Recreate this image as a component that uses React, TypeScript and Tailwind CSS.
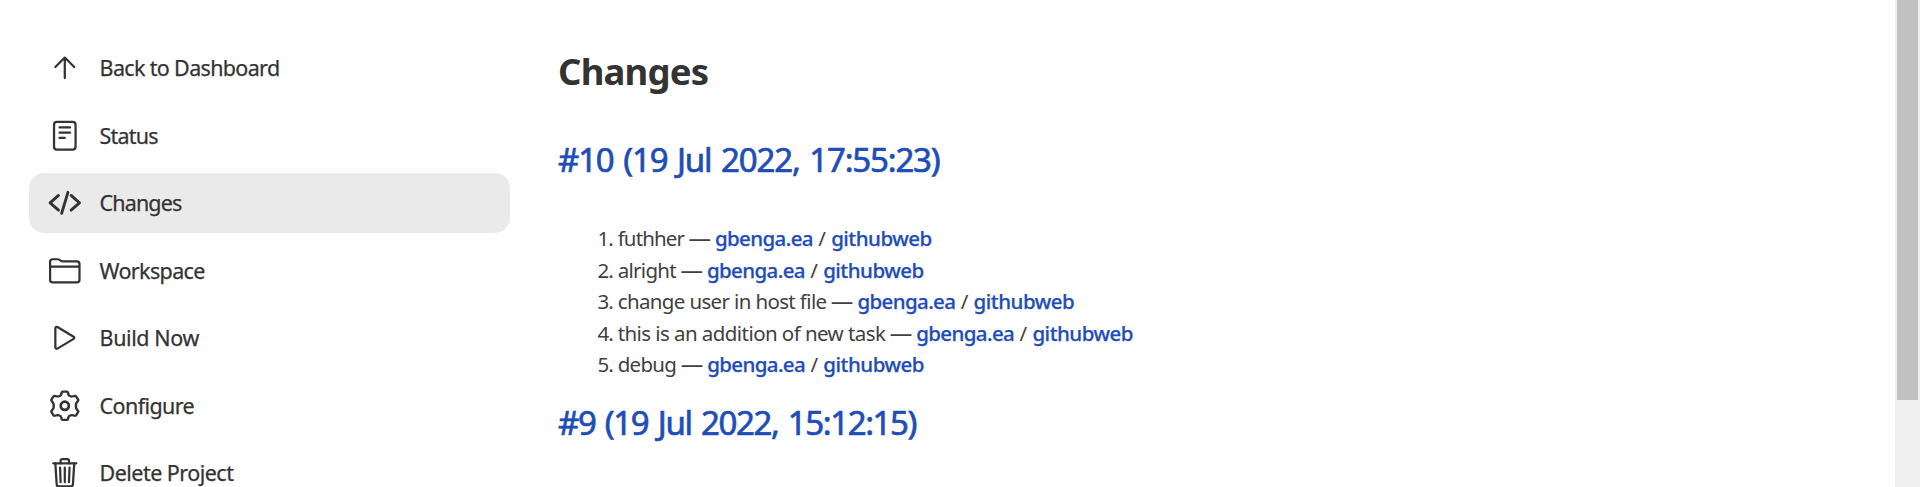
import type { ReactNode } from "react";

type NavItem = { label: string; tracking: string; stroke: number; icon: ReactNode; active?: boolean };

const navItems: NavItem[] = [
  {
    label: "Back to Dashboard",
    tracking: "tracking-[-0.66px]",
    stroke: 34,
    icon: <path d="M112 244l144-144 144 144M256 120v292" />,
  },
  {
    label: "Status",
    tracking: "tracking-[-0.8px]",
    stroke: 34,
    icon: (
      <>
        <rect x="92" y="44" width="328" height="424" rx="44" />
        <path d="M176 128h160M176 208h160M176 288h80" />
      </>
    ),
  },
  {
    label: "Changes",
    tracking: "tracking-[-0.87px]",
    stroke: 44,
    active: true,
    icon: <path d="M160 368L32 256l128-112M352 368l128-112-128-112M304 96l-96 320" />,
  },
  {
    label: "Workspace",
    tracking: "tracking-[-0.65px]",
    stroke: 34,
    icon: (
      <path d="M440 432H72a40 40 0 01-40-40V120a40 40 0 0140-40h75.89a40 40 0 0122.19 6.72l27.84 18.56a40 40 0 0022.19 6.72H440a40 40 0 0140 40v240a40 40 0 01-40 40zM32 192h448" />
    ),
  },
  {
    label: "Build Now",
    tracking: "tracking-[-0.4px]",
    stroke: 34,
    icon: (
      <path d="M112 111v290c0 17.44 17 28.52 31 20.16l247.9-148.37c12.12-7.25 12.12-26.33 0-33.58L143 90.84c-14-8.36-31 2.72-31 20.16z" />
    ),
  },
  {
    label: "Configure",
    tracking: "tracking-[-0.6px]",
    stroke: 34,
    icon: (
      <>
        <circle cx="256" cy="256" r="62" strokeWidth="42" />
        <path
          transform="translate(-23 0) scale(1.09 1)"
          d="M215 48Q219 40 228 40H284Q293 40 297 48L309 90Q311 98 319 101L340 112Q347 116 355 114L397 104Q407 102 413 111L443 161Q448 169 442 176L418 214Q412 223 412 231V281Q412 289 418 298L442 336Q448 343 443 351L413 401Q407 410 397 408L355 398Q347 396 340 400L319 411Q311 414 309 422L297 464Q293 472 284 472H228Q219 472 215 464L203 422Q201 414 193 411L172 400Q165 396 157 398L115 408Q105 410 99 401L69 351Q64 343 70 336L94 298Q100 289 100 281V231Q100 223 94 214L70 176Q64 169 69 161L99 111Q105 102 115 104L157 114Q165 116 172 112L193 101Q201 98 203 90Z"
        />
      </>
    ),
  },
  {
    label: "Delete Project",
    tracking: "tracking-[-0.53px]",
    stroke: 34,
    icon: (
      <>
        <path d="M112 112l20 320c.95 18.49 14.4 32 32 32h184c17.67 0 30.87-13.51 32-32l20-320" />
        <path d="M80 112h352" />
        <path d="M192 112V72a23.93 23.93 0 0124-24h80a23.93 23.93 0 0124 24v40M256 176v224M184 176l8 224M328 176l-8 224" />
      </>
    ),
  },
];

const changes = [
  { message: "futhher", tracking: "tracking-[-0.88px]" },
  { message: "alright", tracking: "tracking-[-0.7px]" },
  { message: "change user in host file", tracking: "tracking-[-0.64px]" },
  { message: "this is an addition of new task", tracking: "tracking-[-0.57px]" },
  { message: "debug", tracking: "tracking-[-0.7px]" },
];

export default function App() {
  return (
    <div className="flex h-[487px] overflow-hidden bg-white font-['Noto_Sans','Open_Sans',sans-serif] text-[#333333]">
      <aside className="w-[510px] shrink-0 pl-[29px] pt-[38px]">
        <nav className="flex flex-col gap-[7.5px]">
          {navItems.map((item) => (
            <a
              key={item.label}
              className={`flex h-[60px] shrink-0 items-center rounded-[15px] pl-[19px] ${item.active ? "bg-[#eaeaea]" : ""}`}
            >
              <svg
                viewBox="0 0 512 512"
                className="size-[33.6px] shrink-0 overflow-visible"
                fill="none"
                stroke="currentColor"
                strokeWidth={item.stroke}
                strokeLinecap="round"
                strokeLinejoin="round"
              >
                {item.icon}
              </svg>
              <span
                className={`ml-[18px] whitespace-nowrap text-[21.5px] leading-[30px] [-webkit-text-stroke:0.25px_currentColor] ${item.tracking}`}
              >
                {item.label}
              </span>
            </a>
          ))}
        </nav>
      </aside>
      <main className="min-w-0 grow pl-[48px] pt-[45px]">
        <h1 className="text-[36.5px] leading-[52px] font-bold tracking-[-0.8px]">Changes</h1>
        <h2 className="mt-[39px] text-[33px] leading-[48px] tracking-[-1.18px] [word-spacing:2.3px] text-[#1f4db8] [-webkit-text-stroke:0.7px_currentColor]">
          #10 (19 Jul 2022, 17:55:23)
        </h2>
        <ol className="mt-[38px] pl-[39.5px] text-[20.5px] leading-[31.5px] text-[#404040]">
          {changes.map((change, i) => (
            <li key={change.message} className="flex h-[31.5px] items-baseline whitespace-nowrap">
              <span className="w-[20.2px] shrink-0 tracking-[-1px]">{i + 1}.</span>
              <span className={change.tracking}>{change.message}</span>
              <span className="ml-[4.4px] text-[22.5px]">—</span>
              <a className="ml-[4px] font-medium tracking-[-0.62px] text-[#1f4db8] [-webkit-text-stroke:0.25px_currentColor]">
                gbenga.ea
              </a>
              <span className="mx-[5.3px]">/</span>
              <a className="font-medium tracking-[-0.5px] text-[#1f4db8] [-webkit-text-stroke:0.25px_currentColor]">
                githubweb
              </a>
            </li>
          ))}
        </ol>
        <h2 className="mt-[19px] text-[33px] leading-[48px] tracking-[-1.4px] [word-spacing:2.3px] text-[#1f4db8] [-webkit-text-stroke:0.7px_currentColor]">
          #9 (19 Jul 2022, 15:12:15)
        </h2>
      </main>
      <div className="flex w-[25px] shrink-0 justify-center bg-[#f0f0f0]">
        <div className="h-[400px] w-[21px] bg-[#c1c1c1]" />
      </div>
    </div>
  );
}
